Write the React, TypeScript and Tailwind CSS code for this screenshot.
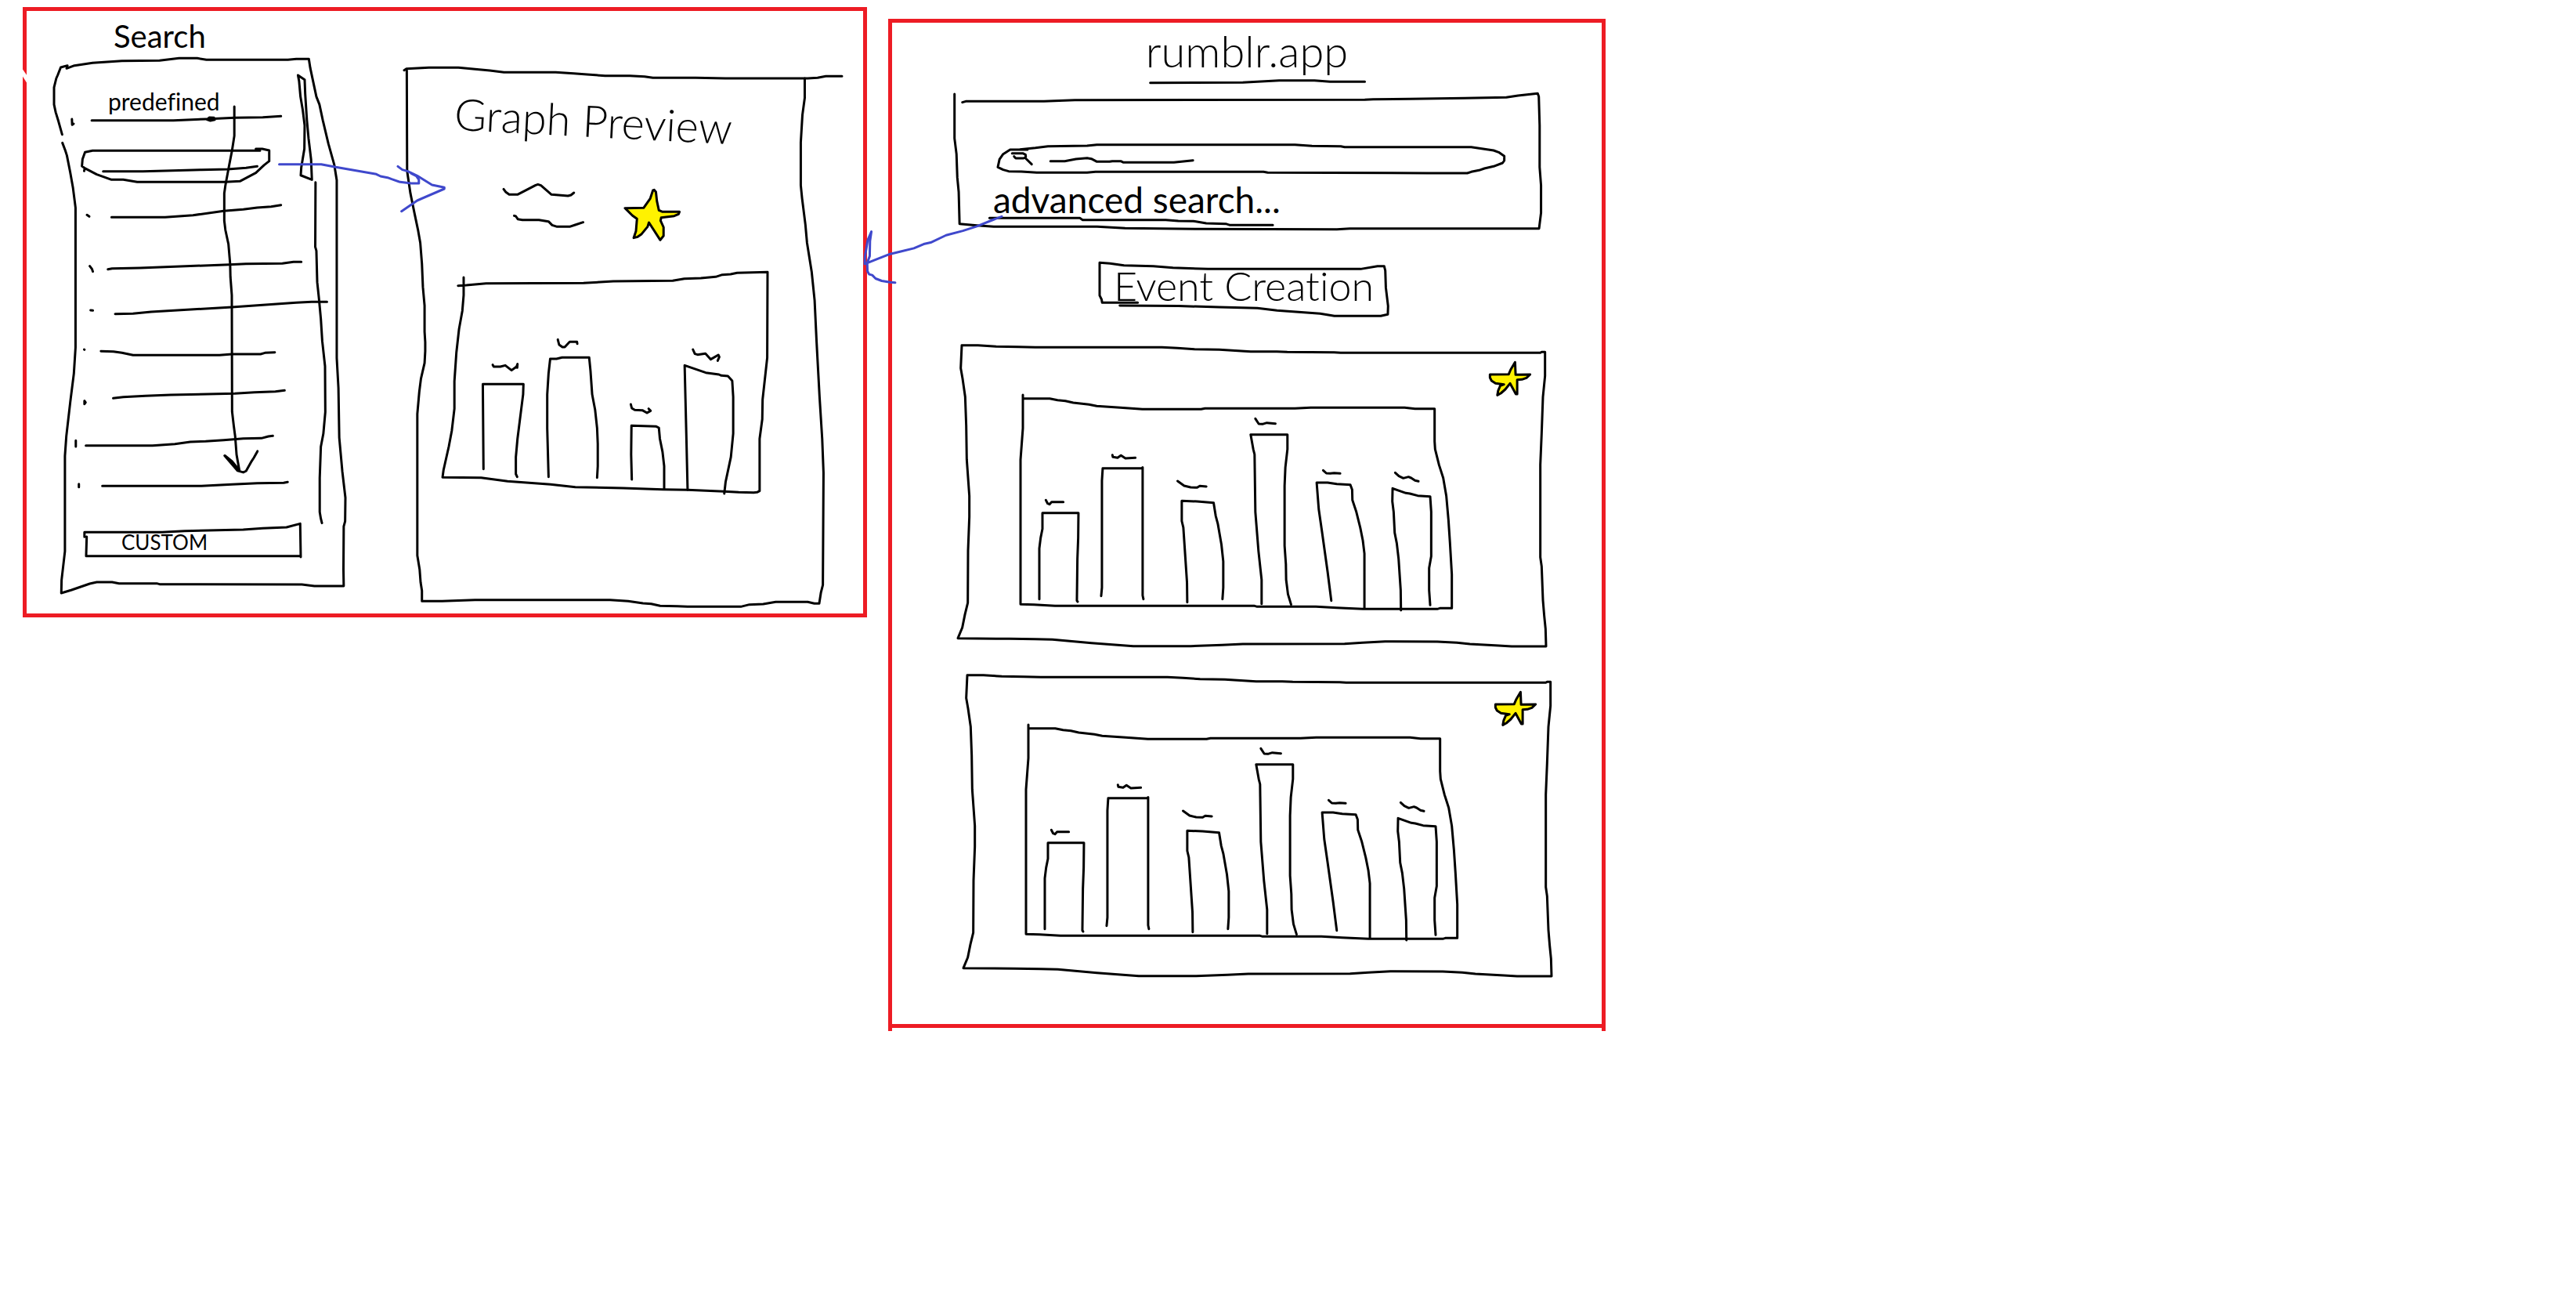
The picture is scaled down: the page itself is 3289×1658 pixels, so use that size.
import type { ReactNode } from "react";

type DrawingProps = {
  viewBox: string;
  className?: string;
  children: ReactNode;
};

/* Pen strokes that stretch with their box while keeping an even line width. */
function Drawing({ viewBox, className = "", children }: DrawingProps) {
  return (
    <svg
      aria-hidden="true"
      viewBox={viewBox}
      preserveAspectRatio="none"
      className={`pointer-events-none block overflow-visible fill-none stroke-black stroke-3 [stroke-linecap:round] [stroke-linejoin:round] [&_path]:[vector-effect:non-scaling-stroke] ${className}`}
    >
      {children}
    </svg>
  );
}

const searchRows = [
  {
    top: 720,
    name: "Search 2",
    d: "M398 832 L590 832 L690 824 L800 808 L870 802 L920 795 L970 791 L1005 785 M310 823 L318 829",
  },
  {
    top: 900,
    name: "Search 3",
    d: "M385 1031 L400 1028 L500 1026 L820 1013 L880 1010 L1010 1009 L1050 1003 L1078 1003 M320 1019 L328 1030 L331 1040",
  },
  {
    top: 1080,
    name: "Search 4",
    d: "M411 1202 L475 1201 L540 1194 L830 1176 L1060 1159 L1115 1156 L1170 1156 M323 1188 L331 1189",
  },
  {
    top: 1260,
    name: "Search 5",
    d: "M360 1345 L405 1346 L435 1351 L475 1360 L785 1360 L830 1356 L932 1356 L948 1351 L983 1349 M300 1338 L301 1339",
  },
  {
    top: 1440,
    name: "Search 6",
    d: "M404 1525 L440 1520 L520 1516 L610 1512 L840 1507 L910 1502 L985 1499 L1018 1495 M301 1535 L301 1547 L305 1541 Z",
  },
  {
    top: 1620,
    name: "Search 7",
    d: "M306 1706 L545 1706 L625 1700 L680 1692 L735 1690 L800 1685 L870 1679 L935 1678 L960 1671 L976 1669 M270 1687 L270 1710",
  },
  {
    top: 1800,
    name: "Search 8",
    d: "M365 1861 L720 1861 L830 1855 L920 1850 L1015 1849 L1029 1846 M281 1853 L281 1865",
  },
];

function SearchList() {
  return (
    <div className="relative pb-[37px]">
      <Drawing viewBox="192 222 1044 2048" className="absolute inset-0 h-full w-full">
        <path d="M221 515 L208 465 L198 430 L192 400 L192 335 L200 300 L205 288 L216 258 L240 251 L237 262 L265 251 L330 241 L435 233 L570 232 L640 223 L705 223 L738 229 L1030 229 L1060 226 L1105 226 L1110 260 L1120 310 L1132 370 L1143 400 L1155 460 L1175 550 L1196 630 L1205 690 L1205 1370 L1211 1485 L1214 1675 L1225 1805 L1236 1905 L1235 1995 L1230 2015 L1229 2180 L1230 2243 L1125 2243 L1080 2237 L570 2236 L560 2233 L425 2233 L400 2228 L345 2228 L320 2234 L255 2258 L218 2270 L219 2220 L231 2110 L231 1745 L236 1670 L250 1540 L263 1430 L269 1330 L269 795 L260 720 L250 660 L238 595 L232 575 L222 547" />
        <path d="M1066 288 L1090 305 L1092 360 L1098 460 L1104 530 L1113 610 L1116 688 L1076 671 L1078 640 L1089 570 L1090 480 L1083 420 L1075 370 L1070 310 Z" />
        <path d="M1129 698 L1128 945 L1132 960 L1135 1080 L1141 1140 L1148 1220 L1153 1305 L1163 1402 L1164 1577 L1157 1660 L1148 1710 L1144 1830 L1144 1960 L1148 1985 L1152 2002" />
        <path d="M838 408 L838 520 L830 575 L820 630 L806 710 L802 740 L802 845 L806 880 L817 935 L823 1010 L824 1060 L829 1130 L830 1575 L836 1630 L841 1670 L846 1740 L856 1800" />
        <path d="M803 1744 L850 1802 L870 1808 L880 1803 L900 1765 L908 1752 L921 1727 M805 1744 L830 1766 L856 1800" />
      </Drawing>
      <h3 className="pt-[38px] pl-[69px] text-3xl leading-[34px]">predefined</h3>
      <Drawing viewBox="192 438 1044 102" className="h-[34px] w-full">
        <path d="M327 461 L620 461 L735 456 L840 451 L940 449 L1005 445 M740 458 L748 450 L765 451 L768 458 L752 462 Z M256 456 L257 478 L262 474" />
      </Drawing>
      <ul>
        <li>
          <button type="button" aria-label="Search 1" className="block h-15 w-full">
            <Drawing viewBox="192 540 1044 180" className="h-full w-full">
              <path d="M930 577 L330 577 L303 583 L294 610 L292 636 L302 644 L345 668 L398 688 L440 688 L490 697 L805 697 L858 694 L915 662 L945 632 L963 617 L963 576 L938 570 L915 570 M300 655 L302 644" />
              <path d="M368 656 L510 656 L615 653 L720 650 L815 648 L880 643 L920 637" />
            </Drawing>
          </button>
        </li>
        {searchRows.map((row) => (
          <li key={row.top}>
            <button type="button" aria-label={row.name} className="block h-15 w-full">
              <Drawing viewBox={`192 ${row.top} 1044 180`} className="h-full w-full">
                <path d={row.d} />
              </Drawing>
            </button>
          </li>
        ))}
      </ul>
      <button type="button" className="relative block h-15 w-full pt-1 pl-[86px] text-left text-[26px]">
        <Drawing viewBox="192 1980 1044 180" className="absolute inset-0 h-full w-full">
          <path d="M301 2056 L301 2038 L580 2038 L660 2033 L870 2028 L940 2023 L1025 2019 L1074 2005 L1076 2133 M1076 2129 L307 2129 L309 2055" />
        </Drawing>
        CUSTOM
      </button>
    </div>
  );
}

function GraphPreview() {
  return (
    <article className="relative mt-[72px] pb-[145px]">
      <Drawing viewBox="85 258 1329 2067" className="absolute inset-0 h-full w-full">
        <path d="M85 269 L92 263 L160 259 L250 259 L300 265 L345 270 L388 277 L545 277 L600 281 L640 285 L695 290 L770 290 L815 293 L840 298 L970 298 L1060 300 L1310 300 L1340 298 L1365 292 L1414 292" />
        <path d="M93 270 L94 655 L104 740 L117 820 L127 880 L134 930 L139 1010 L142 1100 L147 1170 L147 1270 L149 1310 L149 1345 L147 1390 L136 1450 L131 1500 L125 1585 L125 2127 L132 2180 L135 2230 L139 2262 L139 2302 L200 2302 L300 2297 L710 2297 L765 2302 L810 2310 L835 2312 L862 2320 L915 2321 L945 2323 L1107 2323 L1133 2315 L1175 2313 L1213 2305 L1310 2305 L1330 2311 L1345 2311 L1350 2270 L1356 2240 L1358 1810 L1354 1680 L1346 1520 L1337 1310 L1331 1150 L1322 1040 L1308 930 L1303 860 L1293 760 L1289 710 L1289 545 L1294 440 L1301 375 L1301 300" />
      </Drawing>
      <div className="pt-8 pl-16">
        <h2 className="inline-block rotate-3 align-top text-[56px] leading-[72px] font-light whitespace-nowrap">Graph Preview</h2>
      </div>
      <div className="flex gap-[53px] pt-[45px] pb-[38px] pl-[127px]">
        <Drawing viewBox="388 705 242 219" className="h-[73px] w-[102px]">
          <path d="M388 724 L395 736 L405 745 L430 745 L485 709 L492 706 L501 710 L533 745 L583 750 L592 747 L601 738" />
          <path d="M420 826 L425 828 L431 839 L445 842 L495 842 L524 848 L535 862 L550 868 L588 868 L605 861 L629 851" />
        </Drawing>
        <button type="button" aria-label="Favorite graph" className="h-[73px] w-[70px]">
          <Drawing viewBox="757 705 165 219" className="h-full w-full">
            <path
              className="fill-[#fff200]"
              d="M845 727 L850 735 L853 770 L859 805 L870 811 L921 811 L918 820 L905 827 L866 833 L864 845 L873 870 L873 903 L863 919 L829 852 L825 868 L807 896 L795 907 L783 911 L790 885 L793 838 L779 825 L757 797 L813 796 L833 760 L841 729 Z"
            />
          </Drawing>
        </button>
      </div>
      <div className="pr-[95px] pl-[49px]">
        <Drawing viewBox="203 1038 984 852" className="h-[284px] w-full">
          <path d="M250 1094 L275 1092 L335 1085 L630 1084 L720 1077 L900 1075 L935 1067 L985 1065 L1030 1060 L1050 1052 L1075 1050 L1095 1045 L1187 1042 L1186 1370 L1172 1530 L1171 1605 L1163 1680 L1163 1880 L1155 1885 L1145 1886 L1100 1885 L1055 1882 L945 1876 L870 1874 L750 1869 L605 1865 L530 1855 L400 1843 L320 1829 L203 1828 L206 1800 L222 1710 L231 1650 L239 1565 L239 1460 L245 1350 L253 1260 L263 1190 L267 1130 L267 1062" />
          <path d="M327 1796 L325 1471 L448 1471 L447 1510 L437 1610 L430 1680 L425 1750 L425 1815 L429 1826" />
          <path d="M524 1826 L520 1640 L520 1510 L524 1430 L529 1374 L548 1374 L565 1369 L647 1369 L651 1420 L656 1510 L665 1570 L671 1640 L673 1700 L673 1785 L671 1829" />
          <path d="M776 1836 L774 1740 L775 1630 L850 1633 L858 1638 L861 1680 L869 1730 L874 1785 L874 1872" />
          <path d="M945 1876 L941 1660 L936 1399 L1000 1427 L1040 1434 L1047 1438 L1067 1440 L1080 1458 L1083 1520 L1083 1660 L1076 1750 L1060 1845 L1056 1890" />
          <path d="M355 1397 L358 1404 L378 1404 L393 1399 L412 1418 L427 1404 L430 1394 L429 1408" />
          <path d="M552 1300 L556 1320 L566 1329 L573 1329 L588 1309 L610 1309 L611 1316" />
          <path d="M773 1548 L776 1563 L785 1570 L808 1571 L822 1581 L833 1573 L827 1565" />
          <path d="M961 1338 L967 1355 L975 1358 L999 1354 L1015 1376 L1038 1359 L1041 1367 L1036 1381" />
        </Drawing>
      </div>
    </article>
  );
}

function SearchBox() {
  return (
    <section className="relative mt-[10px] mr-[76px] ml-[79px] pt-[65px] pb-[5px]">
      <Drawing viewBox="358 357 2103 522" className="absolute inset-0 h-full w-full">
        <path d="M388 392 L400 388 L680 388 L790 383 L1827 382 L1857 380 L1988 379 L2184 376 L2333 373 L2375 366 L2445 358 L2449 370 L2452 480 L2452 640 L2457 710 L2457 815 L2450 875 L1773 875 L1727 878 L1240 877 L970 874 L870 868 L500 868 L440 863 L378 857 L375 735 L370 680 L367 590 L360 530 L360 360" />
        <path d="M485 835 L808 835 L818 842 L1115 842 L1160 846 L1215 847 L1260 855 L1330 857 L1345 862 L1498 862" />
      </Drawing>
      <div className="relative mr-12 ml-14">
        <input
          type="text"
          aria-label="Search events"
          className="absolute inset-0 w-full bg-transparent pr-4 pl-16 outline-none"
        />
        <Drawing viewBox="516 552 1810 114" className="h-[38px] w-full">
          <path d="M622 573 L560 573 L535 590 L522 610 L516 640 L535 650 L555 656 L600 657 L655 661 L835 661 L865 658 L1465 658 L1480 661 L2053 663 L2193 663 L2207 658 L2235 652 L2254 645 L2287 637 L2319 624 L2325 615 L2325 598 L2305 583 L2287 576 L2207 563 L1755 563 L1741 560 L1638 559 L1577 554 L870 554 L835 558 L695 560 L650 566 L595 572" />
          <path d="M567 587 L605 587 L615 592 L616 602 L608 606 L580 606 L574 599 M615 606 L637 629" />
          <path d="M704 617 L755 617 L795 609 L835 605 L850 608 L870 619 L915 619 L925 617 L955 617 L965 622 L1145 622 L1213 614" />
        </Drawing>
      </div>
      <a href="#advanced" className="relative ml-[50px] inline-block align-top text-[46px] leading-[66px] whitespace-nowrap">
        advanced search...
      </a>
    </section>
  );
}

function EventCard({ className, name }: { className: string; name: string }) {
  return (
    <article className={`relative flex items-start pt-[21px] pr-5 pb-[46px] pl-[79px] ${className}`}>
      <Drawing viewBox="68 60 2254 1160" className="absolute inset-0 h-full w-full">
        <path d="M83 62 L145 62 L215 67 L300 68 L365 70 L850 70 L910 73 L975 77 L1070 79 L1190 86 L1290 86 L1330 88 L1510 89 L1535 91 L2300 91 L2305 88 L2318 88 L2318 180 L2310 260 L2305 400 L2300 520 L2300 875 L2305 910 L2310 1040 L2315 1100 L2320 1150 L2322 1217 L2190 1217 L2140 1214 L2030 1208 L1980 1203 L1905 1199 L1705 1198 L1620 1203 L1550 1207 L1160 1208 L1080 1212 L960 1216 L740 1216 L580 1204 L430 1191 L365 1189 L265 1188 L68 1186 L85 1145 L95 1095 L106 1050 L107 850 L112 720 L112 640 L102 500 L100 370 L96 260 L86 190 L79 150 Z" />
      </Drawing>
      <div className="mt-[43px] min-w-0 flex-1">
        <Drawing viewBox="305 252 1657 828" className="h-[276px] w-full">
          <path d="M317 252 L317 380 L308 500 L308 1054 L360 1055 L440 1060 L1205 1060 L1215 1063 L1440 1063 L1520 1067 L1620 1072 L1905 1072 L1915 1069 L1961 1069 L1961 940 L1954 820 L1948 730 L1940 640 L1928 570 L1912 520 L1897 460 L1895 430 L1895 305 L1820 305 L1780 301 L1420 301 L1360 304 L1015 304 L1000 307 L775 307 L690 301 L600 295 L570 289 L510 282 L480 275 L450 272 L420 266 L317 266" />
          <path d="M380 1034 L380 840 L385 800 L392 765 L392 704 L530 704 L529 800 L526 880 L524 1040 L527 1044" />
          <path d="M617 1022 L620 990 L620 580 L623 533 L773 533 L776 530 L776 1020 L779 1034" />
          <path d="M947 1046 L946 970 L938 850 L932 760 L926 735 L926 658 L985 660 L1048 665 L1056 715 L1064 745 L1078 825 L1085 890 L1085 990 L1082 1034" />
          <path d="M1232 1052 L1232 960 L1220 850 L1208 700 L1205 480 L1200 460 L1190 404 L1331 404 L1331 460 L1323 530 L1320 600 L1320 830 L1325 900 L1326 960 L1333 1015 L1345 1055" />
          <path d="M1499 1040 L1485 930 L1464 780 L1451 690 L1443 588 L1485 588 L1520 593 L1572 596 L1579 615 L1580 655 L1595 700 L1610 760 L1620 810 L1626 860 L1626 1068" />
          <path d="M1766 1077 L1765 1000 L1757 880 L1750 820 L1742 780 L1738 700 L1733 660 L1734 610 L1785 628 L1800 630 L1830 638 L1878 641 L1882 700 L1882 870 L1874 915 L1874 1000 L1878 1057" />
          <path d="M405 655 L412 668 L419 671 L427 662 L472 662" />
          <path d="M660 482 L662 490 L680 493 L693 484 L710 495 L748 493" />
          <path d="M910 582 L935 600 L960 606 L985 607 L995 601 L1020 603" />
          <path d="M1208 343 L1221 363 L1235 364 L1252 359 L1285 362" />
          <path d="M1468 541 L1480 552 L1495 553 L1510 551 L1533 553" />
          <path d="M1744 550 L1758 563 L1775 571 L1795 566 L1805 570 L1820 580 L1833 583" />
        </Drawing>
      </div>
      <button type="button" aria-label={`Favorite ${name}`} className="relative ml-[47px] h-[44px] w-[53px]">
        <Drawing viewBox="1023 122 157 132" className="h-full w-full">
          <path
            className="fill-[#fff200]"
            d="M1122 126 L1124 174 L1179 173 L1165 186 L1148 192 L1130 193 L1130 248 L1125 248 L1103 207 L1085 230 L1068 245 L1055 252 L1058 235 L1066 216 L1080 211 L1048 207 L1033 197 L1027 185 L1027 173 L1098 172 L1105 155 Z"
          />
        </Drawing>
      </button>
    </article>
  );
}

export default function App() {
  return (
    <main className="grid min-h-screen grid-cols-[1078fr_916fr_1212fr] items-start gap-x-[27px] bg-white pt-[9px] pl-[29px] font-['Lato','Liberation_Sans',sans-serif] text-black [font-variant-ligatures:none]">
      <section className="relative grid grid-cols-[372fr_559fr] items-start gap-x-[75px] border-5 border-[#ed1c24] pr-[27px] pb-2 pl-[35px]">
        <div className="pb-[18px]">
          <h2 className="pt-1 pl-[76px] text-[40px] leading-[56px]">Search</h2>
          <SearchList />
        </div>
        <GraphPreview />
        <Drawing viewBox="95 42 2990 2307" className="absolute inset-0 h-full w-full">
          <path className="fill-white stroke-none" d="M76 258 L99 293 L99 323 L76 284 Z" />
          <path
            className="stroke-[#3f48cc]"
            d="M998 629 L1148 629 L1200 640 L1345 667 L1360 675 L1385 680 L1400 686 L1430 697 L1470 702 L1497 702 L1497 688 L1488 674 L1470 664"
          />
          <path
            className="stroke-[#3f48cc]"
            d="M1422 637 L1438 650 L1456 655 L1491 673 L1544 708 L1588 718 L1588 723 L1491 768 L1435 809"
          />
        </Drawing>
      </section>

      <section className="mt-[15px] border-x-5 border-t-5 border-[#ed1c24] pb-1">
        <div className="relative border-b-5 border-[#ed1c24] pb-[60px]">
          <h1 className="text-center text-[56px] leading-[72px] font-light">rumblr.app</h1>
          <Drawing viewBox="137 303 2537 24" className="h-2 w-full">
            <path d="M1060 317 L1391 316 L1521 308 L1647 308 L1703 313 L1827 313" />
          </Drawing>
          <SearchBox />
          <div className="flex justify-center pt-[42px] pr-2">
            <button type="button" className="relative h-[69px] w-[369px] pb-3 text-center text-[52px] leading-[56px] font-light whitespace-nowrap">
              <Drawing viewBox="878 1004 1033 206" className="absolute inset-0 h-full w-full">
                <path d="M950 1168 L1160 1170 L1305 1174 L1442 1178 L1512 1187 L1666 1199 L1717 1208 L1883 1208 L1908 1202 L1909 1170 L1901 1100 L1899 1035 L1895 1018 L1871 1018 L1811 1029 L1265 1029 L1140 1024 L1070 1018 L965 1015 L915 1008 L878 1005 L878 1130 L885 1145 L887 1157 L1014 1157" />
              </Drawing>
              Event Creation
            </button>
          </div>
          <EventCard className="mt-[36px] mr-[71px] ml-[84px]" name="event 1" />
          <EventCard className="mt-[35px] mr-[64px] ml-[91px]" name="event 2" />
          <Drawing viewBox="137 87 2537 3840" className="absolute inset-0 h-full w-full">
            <path
              className="stroke-[#3f48cc]"
              d="M529 830 L500 842 L440 868 L390 885 L330 902 L275 930 L250 936 L215 952 L165 965 L130 974 L80 995 L45 1010 L39 1012 L40 985 L50 920 L63 888 L58 925 L57 982 L48 1008 L49 1040 L55 1052 L66 1055 L78 1068 L100 1077 L130 1082 L148 1084"
            />
          </Drawing>
        </div>
      </section>
    </main>
  );
}
